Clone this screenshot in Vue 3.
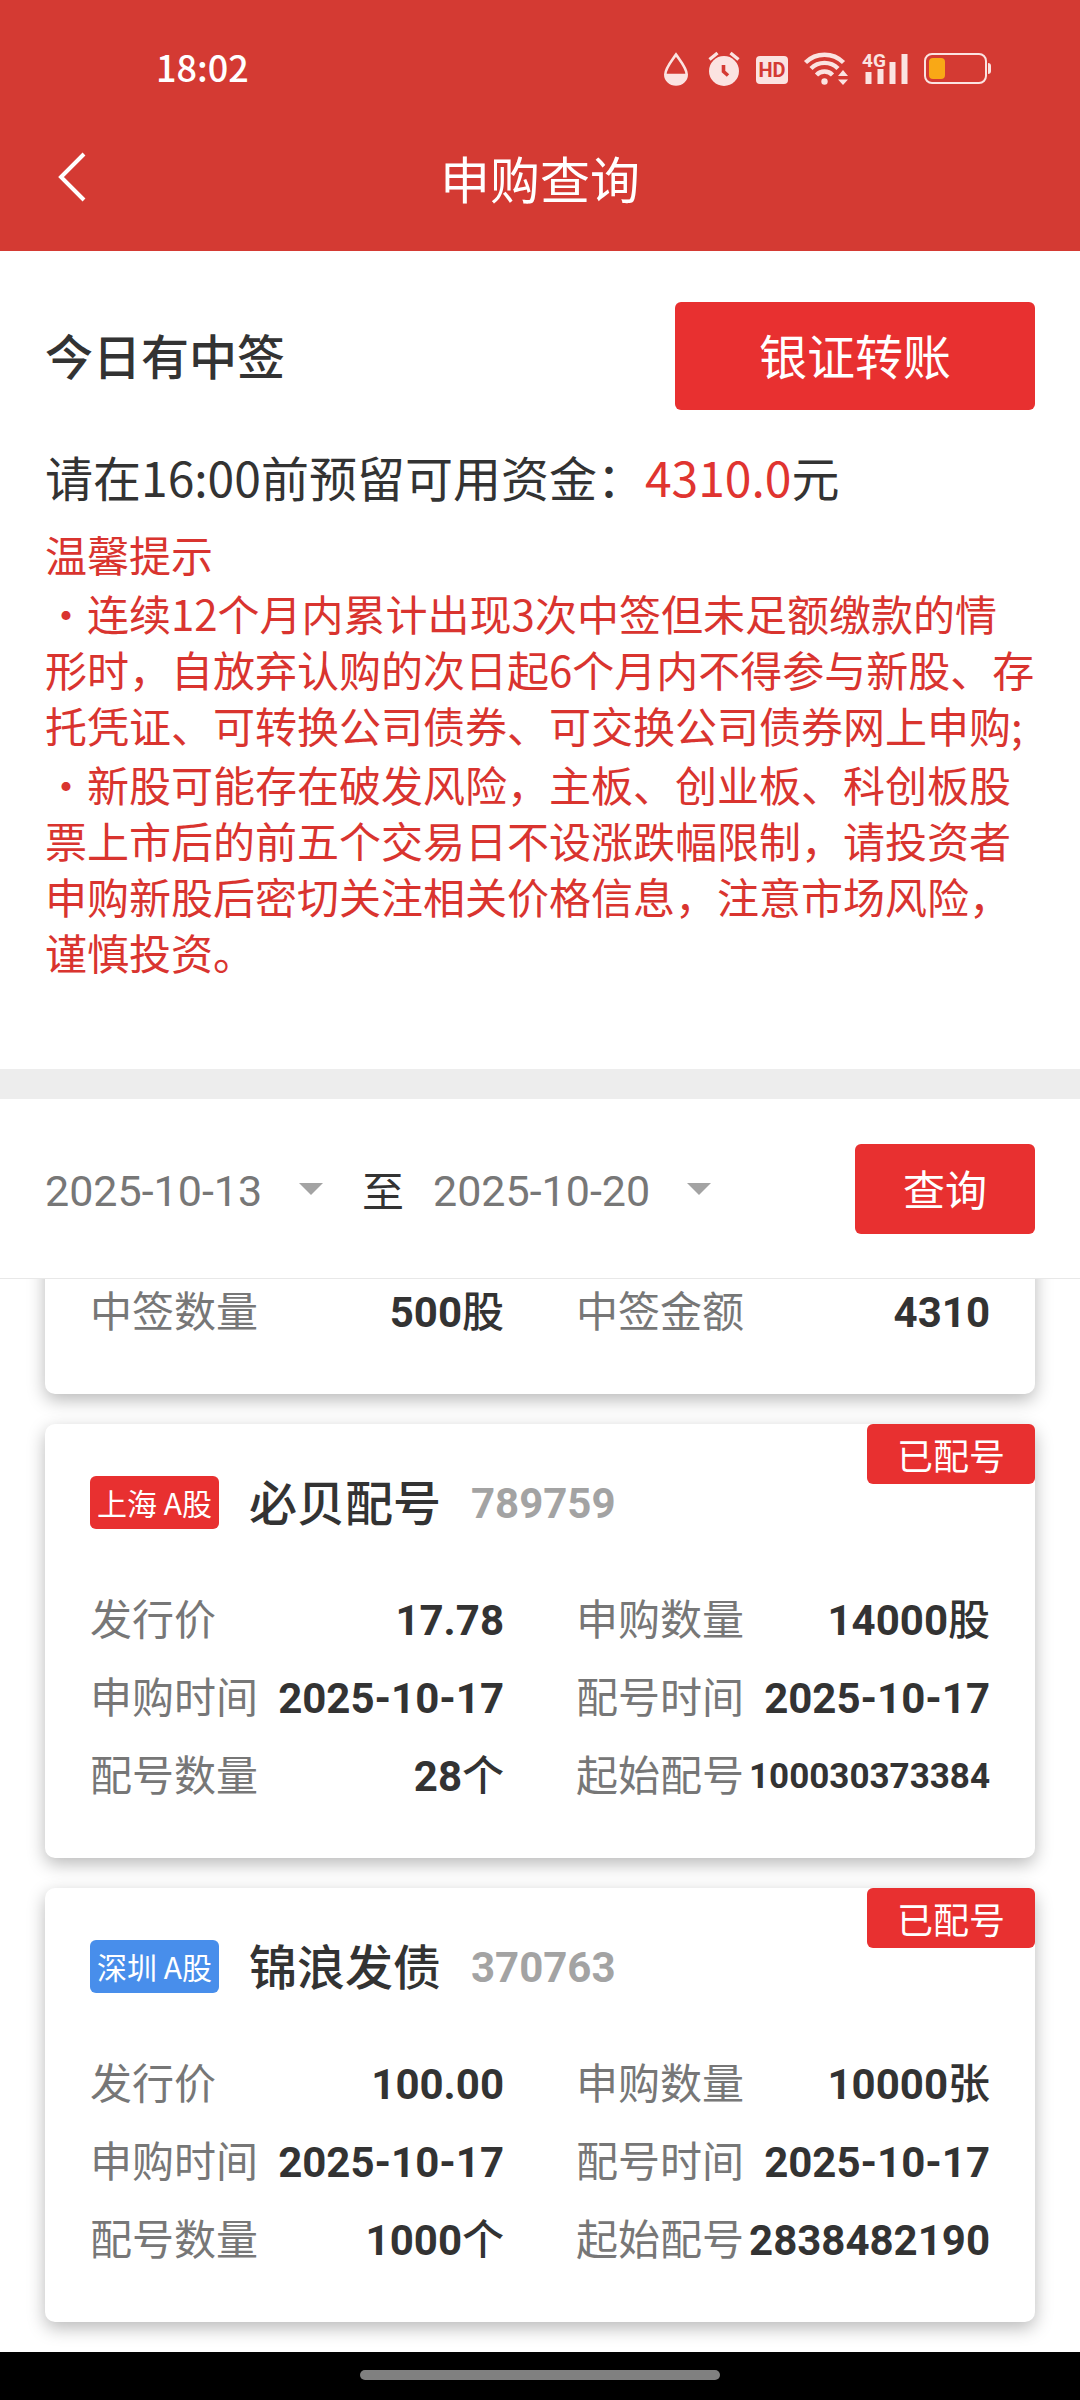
<script setup>
import { ref } from 'vue'

const startDate = ref('2025-10-13')
const endDate = ref('2025-10-20')

const tips = [
  '・连续12个月内累计出现3次中签但未足额缴款的情形时，自放弃认购的次日起6个月内不得参与新股、存托凭证、可转换公司债券、可交换公司债券网上申购;',
  '・新股可能存在破发风险，主板、创业板、科创板股票上市后的前五个交易日不设涨跌幅限制，请投资者申购新股后密切关注相关价格信息，注意市场风险，谨慎投资。'
]

const records = [
  {
    id: 'won',
    fields: [
      { label: '中签数量', value: '500', unit: '股' },
      { label: '中签金额', value: '4310' }
    ]
  },
  {
    id: '789759',
    market: '上海 A股',
    marketClass: 'sh',
    name: '必贝配号',
    status: '已配号',
    fields: [
      { label: '发行价', value: '17.78' },
      { label: '申购数量', value: '14000', unit: '股' },
      { label: '申购时间', value: '2025-10-17' },
      { label: '配号时间', value: '2025-10-17' },
      { label: '配号数量', value: '28', unit: '个' },
      { label: '起始配号', value: '100030373384', long: true }
    ]
  },
  {
    id: '370763',
    market: '深圳 A股',
    marketClass: 'sz',
    name: '锦浪发债',
    status: '已配号',
    fields: [
      { label: '发行价', value: '100.00' },
      { label: '申购数量', value: '10000', unit: '张' },
      { label: '申购时间', value: '2025-10-17' },
      { label: '配号时间', value: '2025-10-17' },
      { label: '配号数量', value: '1000', unit: '个' },
      { label: '起始配号', value: '2838482190' }
    ]
  }
]
</script>

<template>
  <div class="page" lang="zh-CN">
    <header class="header">
      <div class="status-bar">
        <time class="clock">18:02</time>
        <svg class="status-icons" viewBox="20 18 334 40" width="334" height="40" aria-hidden="true">
          <path d="M36 24.5C40 30.5 46.700 38 46.700 44.500a10.700 10 0 0 1-21.400 0C25.300 38 32 30.500 36 24.500z" fill="none" stroke="currentColor" stroke-width="2.600" />
          <path d="M25 43.700h22c.8 6-4 11.300-11 11.300s-11.800-5.300-11-11.300z" fill="currentColor" />
          <circle cx="84" cy="41" r="15" fill="currentColor" />
          <path d="M69.500 29.500l8-6.500M98.500 29.500l-8-6.500" stroke="currentColor" stroke-width="3.400" />
          <path d="M83.500 35v6.500l4.500 4" fill="none" stroke="#d43a33" stroke-width="3.600" />
          <rect x="116" y="26" width="32" height="28" rx="4" fill="currentColor" />
          <text x="132" y="47" text-anchor="middle" class="hd">HD</text>
          <g fill="none" stroke="currentColor" stroke-width="4.400">
            <path d="M165.500 32.500a27 27 0 0 1 38 0" />
            <path d="M171 38.500a19 19 0 0 1 27 0" />
            <path d="M176.500 45a11 11 0 0 1 16 0" />
          </g>
          <circle cx="184.500" cy="51.500" r="3.200" fill="currentColor" />
          <path d="M198 46l5-6 5 6zM198 49.500l5 5.500 5-5.500z" fill="currentColor" />
          <text x="222" y="37" class="net">4G</text>
          <path d="M225.500 42h6v12h-6zM237.500 39h6v15h-6zM249.500 32h6v22h-6zM261.500 24h6v30h-6z" fill="currentColor" />
          <rect x="285" y="24" width="61" height="29" rx="7" fill="none" stroke="currentColor" stroke-width="2" />
          <path d="M348 33a3 3 0 0 1 3 3v5a3 3 0 0 1-3 3z" fill="currentColor" />
          <rect x="289" y="28" width="16" height="21" rx="4" fill="#f9a816" />
        </svg>
      </div>
      <nav class="nav">
        <button class="back" type="button" aria-label="返回">
          <svg viewBox="0 0 30 50" width="30" height="50" aria-hidden="true">
            <path d="M27 2L4 25l23 23" fill="none" stroke="#fff" stroke-width="4" />
          </svg>
        </button>
        <h1 class="title">申购查询</h1>
      </nav>
    </header>

    <section class="notice">
      <div class="notice-head">
        <h2 class="notice-title">今日有中签</h2>
        <button class="btn transfer" type="button">银证转账</button>
      </div>
      <p class="reserve">请在16:00前预留可用资金：<span class="amount">4310.0</span>元</p>
      <div class="tips">
        <h3 class="tips-title">温馨提示</h3>
        <p v-for="tip in tips" :key="tip" class="tip">{{ tip }}</p>
      </div>
    </section>

    <form class="filter" @submit.prevent>
      <label class="date">
        <select v-model="startDate" class="date-input" aria-label="开始日期">
          <option>2025-10-13</option>
        </select>
        <svg class="caret" viewBox="0 0 24 12" width="24" height="12" aria-hidden="true"><path d="M0 0h24L12 12z" fill="#a3a3a3" /></svg>
      </label>
      <span class="to">至</span>
      <label class="date">
        <select v-model="endDate" class="date-input" aria-label="结束日期">
          <option>2025-10-20</option>
        </select>
        <svg class="caret" viewBox="0 0 24 12" width="24" height="12" aria-hidden="true"><path d="M0 0h24L12 12z" fill="#a3a3a3" /></svg>
      </label>
      <button class="btn search" type="submit">查询</button>
    </form>

    <main class="list">
      <article v-for="item in records" :key="item.id" class="card">
        <span v-if="item.status" class="badge">{{ item.status }}</span>
        <div v-if="item.name" class="card-head">
          <span class="market" :class="item.marketClass">{{ item.market }}</span>
          <h2 class="name">{{ item.name }}</h2>
          <span class="code">{{ item.id }}</span>
        </div>
        <dl class="fields">
          <div v-for="field in item.fields" :key="field.label" class="field">
            <dt>{{ field.label }}</dt>
            <dd :class="{ long: field.long }">{{ field.value }}<span v-if="field.unit" class="unit">{{ field.unit }}</span></dd>
          </div>
        </dl>
      </article>
    </main>

    <footer class="gesture-bar"><span class="handle"></span></footer>
  </div>
</template>

<style>
body {
  margin: 0;
  background: #fff;
}
</style>

<style scoped>
.page {
  font-family: "Noto Sans CJK SC", sans-serif;
  font-size: 42px;
  color: #333;
  background: #fff;
}
h1, h2, h3, p, dl, dd {
  margin: 0;
}
button, select {
  margin: 0;
  padding: 0;
  border: 0;
  background: none;
  font: inherit;
}

.header {
  color: #fff;
  background: #d43a33;
}
.status-bar {
  display: flex;
  align-items: center;
  justify-content: space-between;
  height: 106px;
  padding: 30px 86px 0 156px;
  box-sizing: border-box;
}
.clock {
  padding-bottom: 4px;
  font-size: 36px;
  font-weight: 500;
  line-height: 48px;
}
.status-icons {
  color: #fbe3e1;
}
.hd {
  font: 700 20px Roboto, sans-serif;
  fill: #d43a33;
}
.net {
  font: 700 19px Roboto, sans-serif;
  fill: currentColor;
}
.nav {
  display: grid;
  grid-template-columns: 90px 1fr 90px;
  align-items: center;
  height: 141px;
  padding: 0 45px 4px;
}
.back {
  display: flex;
  padding: 10px 12px;
}
.title {
  font-size: 50px;
  font-weight: 400;
  line-height: 72px;
  text-align: center;
}

.notice {
  padding: 51px 45px 89px;
  border-bottom: 30px solid #ededed;
}
.notice-head {
  display: flex;
  align-items: center;
  justify-content: space-between;
}
.notice-title {
  padding-bottom: 4px;
  font-size: 48px;
  font-weight: 500;
  line-height: 72px;
}
.btn {
  color: #fff;
  background: #e83030;
  border-radius: 6px;
}
.transfer {
  width: 360px;
  height: 108px;
  padding-bottom: 4px;
  font-size: 48px;
}
.reserve {
  margin-top: 30px;
  font-size: 48px;
  line-height: 72px;
}
.amount {
  color: #e03430;
}
.tips {
  margin-top: 14px;
  color: #d9342f;
  line-height: 56px;
}
.tips-title {
  font-size: 42px;
  font-weight: 400;
}
.tip {
  margin-top: 3px;
}

.filter {
  display: flex;
  align-items: center;
  padding: 45px 45px 44px;
  border-bottom: 1px solid #e8e8e8;
}
.date {
  display: flex;
  align-items: center;
  gap: 36px;
}
.date-input {
  padding-top: 4px;
  appearance: none;
  font-family: Roboto, sans-serif;
  font-size: 43px;
  line-height: 60px;
  color: #777;
}
.to {
  margin: 0 29px 0 39px;
  line-height: 60px;
}
.search {
  width: 180px;
  height: 90px;
  padding-bottom: 4px;
  margin-left: auto;
}

.list {
  display: flex;
  flex-direction: column;
  gap: 30px;
  padding: 0 45px 30px;
  overflow: hidden;
}
.card {
  position: relative;
  padding: 45px 45px 44px;
  border-radius: 10px;
  background: #fff;
  box-shadow: 0 6px 18px rgba(0, 0, 0, 0.28);
}
/* the list is scrolled: its first card is partly under the filter */
.card:first-child {
  margin-top: -52px;
}
.badge {
  position: absolute;
  top: 0;
  right: 0;
  width: 168px;
  font-size: 36px;
  line-height: 60px;
  text-align: center;
  color: #fff;
  background: #e83030;
  border-radius: 6px;
}
.card-head {
  display: flex;
  align-items: center;
  gap: 30px;
  height: 66px;
  margin-bottom: 45px;
}
.market {
  padding: 0 7px;
  font-size: 30px;
  line-height: 53px;
  color: #fff;
  border-radius: 6px;
}
.sh {
  background: #e83030;
}
.sz {
  background: #488eeb;
}
.name {
  padding-bottom: 4px;
  font-size: 48px;
  font-weight: 500;
  line-height: 60px;
}
.code {
  padding-top: 4px;
  font: 700 42px/60px Roboto, sans-serif;
  color: #a3a3a3;
}
.fields {
  display: grid;
  grid-template-columns: 1fr 1fr;
  column-gap: 72px;
}
.field {
  display: flex;
  align-items: center;
  justify-content: space-between;
  height: 78px;
  line-height: 60px;
  white-space: nowrap;
}
dt {
  padding-bottom: 4px;
  color: #777;
}
dd {
  padding-top: 4px;
  font-family: Roboto, "Noto Sans CJK SC", sans-serif;
  font-weight: 700;
}
.long {
  font-size: 35px;
}
.unit {
  font-weight: 500;
}

.gesture-bar {
  display: flex;
  justify-content: center;
  padding: 18px 0 20px;
  background: #000;
}
.handle {
  width: 33.3333%;
  height: 10px;
  border-radius: 5px;
  background: #808080;
}
</style>
